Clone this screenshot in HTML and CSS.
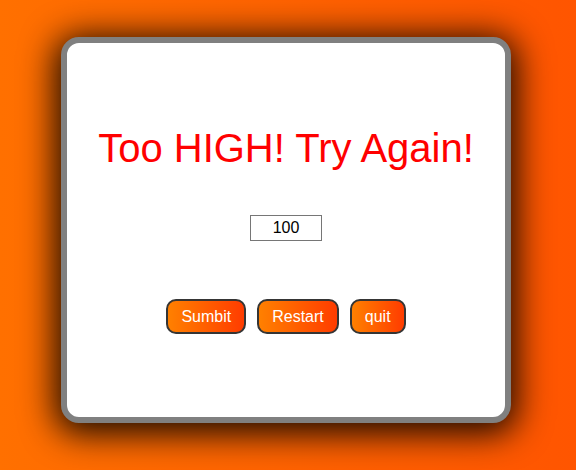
FILE: index.html
```html
<!DOCTYPE html>
<html>
<head>
<meta charset="utf-8">
<link rel="stylesheet" href="styles.css">
</head>
<body>
<div class="page">
  <div class="card">
    <h1 class="message">Too HIGH! Try Again!</h1>
    <input class="guess" type="text" value="100">
    <div class="actions">
      <button class="btn">Sumbit</button>
      <button class="btn">Restart</button>
      <button class="btn">quit</button>
    </div>
  </div>
</div>
</body>
</html>
```
FILE: styles.css
```css
html, body {
  margin: 0;
  padding: 0;
  height: 100%;
}
body {
  background: linear-gradient(to right, #ff7000, #ff5500);
  font-family: "Liberation Sans", Arial, sans-serif;
  overflow: hidden;
}
.page {
  display: flex;
  justify-content: center;
  padding: 37px 4px 0 0;
}
.card {
  width: 438px;
  height: 374px;
  background: #fff;
  border: 6px solid #808080;
  border-radius: 18px;
  box-shadow: 0 5px 34px 6px rgba(0, 0, 0, 0.9);
  display: flex;
  flex-direction: column;
  align-items: center;
}
.message {
  margin: 82px 0 0 0;
  font-size: 40px;
  font-weight: normal;
  line-height: 46px;
  color: #ff0000;
}
.guess {
  margin-top: 44px;
  width: 72px;
  height: 26px;
  box-sizing: border-box;
  border: 1px solid #767676;
  font-family: "Liberation Sans", Arial, sans-serif;
  font-size: 16px;
  text-align: center;
  color: #000;
  padding: 0;
}
.actions {
  margin-top: 58px;
  display: flex;
  gap: 11px;
}
.btn {
  background: linear-gradient(to right, #ff8000, #ff3c00);
  border: 2px solid #353535;
  border-radius: 10px;
  color: #fff;
  font-family: "Liberation Sans", Arial, sans-serif;
  font-size: 16px;
  line-height: 19px;
  padding: 6px 13px;
}
```
